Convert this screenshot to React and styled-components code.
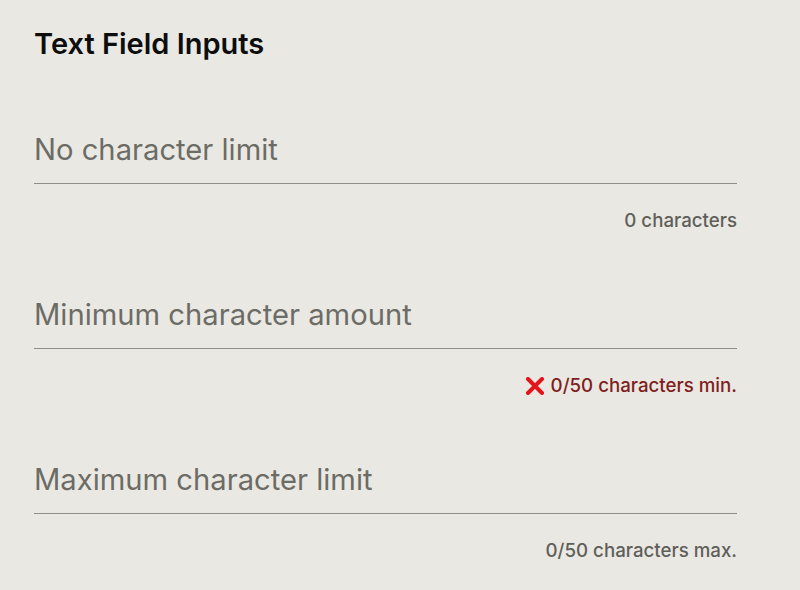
import React from "react";
import styled, { createGlobalStyle } from "styled-components";

const Global = createGlobalStyle`
  html, body { margin: 0; padding: 0; background: #eae8e3; }
  body { font-family: Inter, "Noto Sans", sans-serif; }
`;

const Page = styled.div`
  width: 800px;
  height: 590px;
  box-sizing: border-box;
  padding: 26px 63px 0 34px;
  background: #eae8e3;
  overflow: hidden;
`;

const Title = styled.h1`
  margin: 0;
  font-size: 29px;
  line-height: 36px;
  font-weight: 600;
  color: #0d0d0d;
`;

const FieldList = styled.div`
  display: flex;
  flex-direction: column;
  gap: 62px;
  margin-top: 68px;
`;

const Field = styled.div`
  display: flex;
  flex-direction: column;
`;

const Input = styled.input`
  border: none;
  border-bottom: 1px solid #8f8e89;
  background: transparent;
  outline: none;
  padding: 0 0 13px 0;
  margin: 0;
  font-family: inherit;
  font-size: 29.2px;
  line-height: 40px;
  color: #2b2b28;
  &::placeholder { color: #6c6c66; }
`;

const Counter = styled.div`
  display: flex;
  justify-content: flex-end;
  align-items: center;
  gap: 6px;
  margin-top: 25px;
  font-size: 18.7px;
  line-height: 24px;
  font-weight: 500;
  color: ${(p) => (p.$error ? "#7f1e1e" : "#5f5f5a")};
`;

const Cross = () => (
  <svg width="20" height="18" viewBox="0 0 20 18" aria-hidden="true">
    <path d="M3 2 L17 16 M17 2 L3 16" stroke="#e3141b" strokeWidth="4" strokeLinecap="round" />
  </svg>
);

export default function App() {
  return (
    <Page>
      <Global />
      <Title>Text Field Inputs</Title>
      <FieldList>
        <Field>
          <Input placeholder="No character limit" />
          <Counter>0 characters</Counter>
        </Field>
        <Field>
          <Input placeholder="Minimum character amount" />
          <Counter $error>
            <Cross />
            0/50 characters min.
          </Counter>
        </Field>
        <Field>
          <Input placeholder="Maximum character limit" />
          <Counter>0/50 characters max.</Counter>
        </Field>
      </FieldList>
    </Page>
  );
}
